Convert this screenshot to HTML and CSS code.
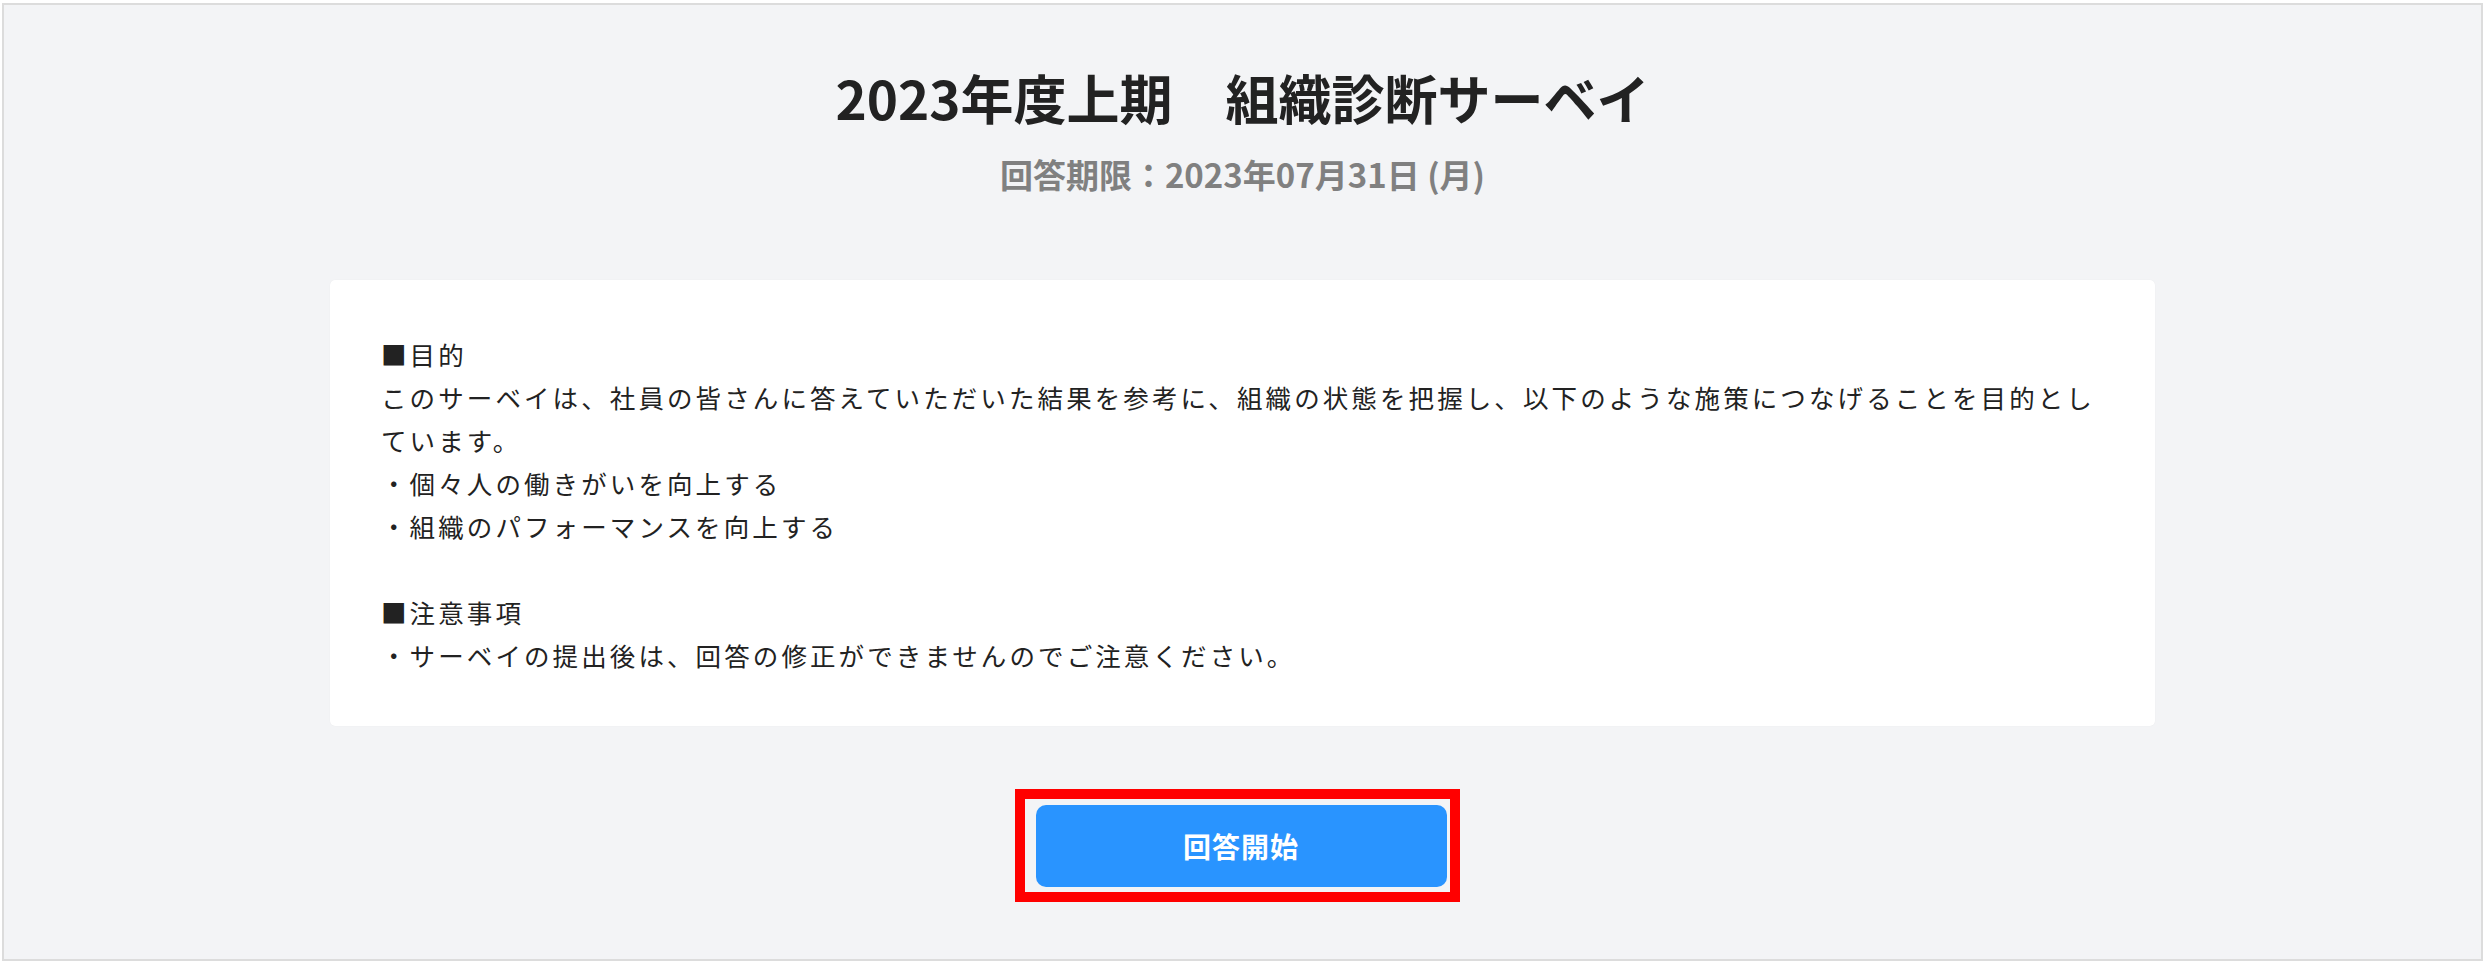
FILE: index.html
```html
<!DOCTYPE html>
<html lang="ja">
<head>
<meta charset="utf-8">
<title>2023年度上期　組織診断サーベイ</title>
<link rel="stylesheet" href="styles.css">
</head>
<body>
<main class="frame">
  <h1 class="title">2023年度上期　組織診断サーベイ</h1>
  <p class="deadline">回答期限：2023年07月31日 (月)</p>
  <section class="card">
    <p class="line">■目的</p>
    <p class="line">このサーベイは、社員の皆さんに答えていただいた結果を参考に、組織の状態を把握し、以下のような施策につなげることを目的としています。</p>
    <p class="line">・個々人の働きがいを向上する</p>
    <p class="line">・組織のパフォーマンスを向上する</p>
    <p class="line blank">&nbsp;</p>
    <p class="line">■注意事項</p>
    <p class="line">・サーベイの提出後は、回答の修正ができませんのでご注意ください。</p>
  </section>
  <div class="highlight">
    <button class="start" type="button">回答開始</button>
  </div>
</main>
</body>
</html>
```

FILE: styles.css
```css
html, body {
  margin: 0;
  padding: 0;
  background: #ffffff;
}

body {
  font-family: "Noto Sans CJK JP", "Noto Sans", sans-serif;
  color: #222222;
}

.frame {
  box-sizing: border-box;
  margin: 3px 1px 1px 2px;
  height: 958px;
  border: 2px solid #dcdcdc;
  background: #f3f4f6;
  display: flex;
  flex-direction: column;
  align-items: center;
}

.title {
  margin: 52px 0 0 0;
  font-size: 53px;
  line-height: 80px;
  font-weight: 700;
  color: #222222;
}

.deadline {
  margin: 14px 0 0 0;
  font-size: 33px;
  line-height: 46px;
  font-weight: 700;
  color: #808080;
}

.card {
  box-sizing: border-box;
  width: 1825px;
  margin-top: 83px;
  padding: 52px 51px 50px 51px;
  background: #ffffff;
  border-radius: 5px;
  box-shadow: 0 0 1px rgba(0, 0, 0, 0.08);
}

.line {
  margin: 0;
  font-size: 25.5px;
  line-height: 43px;
  letter-spacing: 3.1px;
  color: #222222;
}

.highlight {
  margin: 63px 11px 0 0;
  display: flex;
  border: 10px solid #ff0000;
  padding: 6px 3px 5px 11px;
}

.start {
  width: 411px;
  height: 82px;
  border: none;
  border-radius: 10px;
  background: #2994ff;
  color: #ffffff;
  font-family: "Noto Sans CJK JP", "Noto Sans", sans-serif;
  font-size: 28px;
  font-weight: 700;
  letter-spacing: 1px;
  padding: 0;
}
```
